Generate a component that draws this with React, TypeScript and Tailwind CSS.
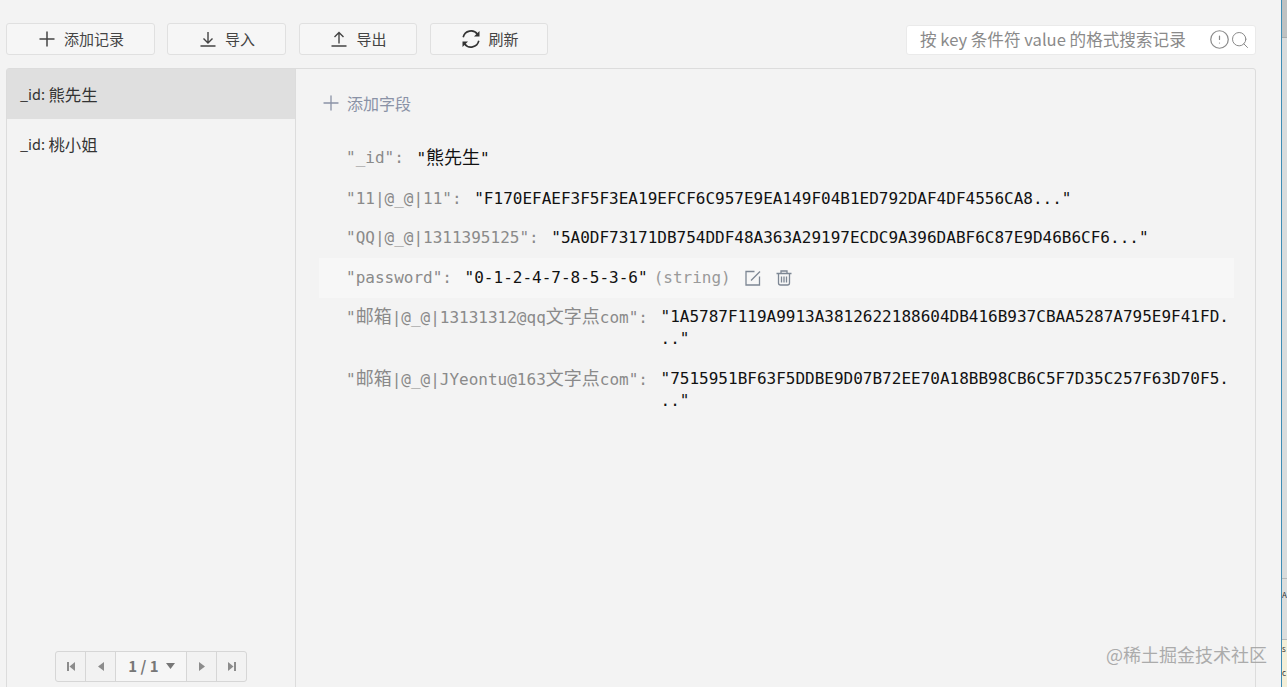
import { Plus, CircleAlert, Search } from "lucide-react";
import type { ReactNode } from "react";

const mono = "font-['DejaVu_Sans_Mono','Noto_Sans_CJK_SC',monospace]";

// CJK glyphs sit wider than the mono cells in this view
function Cjk({ children }: { children: ReactNode }) {
  return <span className="text-[18px]">{children}</span>;
}

function EditIcon() {
  return (
    <svg width="16" height="16" viewBox="0 0 16 16" fill="none" stroke="currentColor" strokeWidth="1.3" className="mr-[15px]">
      <path d="M9.500 1.500H1v13.500h13.500V6.500M6 10.500l9-9" />
    </svg>
  );
}

function TrashIcon() {
  return (
    <svg width="16" height="16" viewBox="0 0 16 16" fill="none" stroke="currentColor" strokeWidth="1.3">
      <path d="M.5 3.500h15M5 3.500V1h6v2.500M2.500 3.500v9.500a2 2 0 0 0 2 2h7a2 2 0 0 0 2-2V3.500M5.500 6.500v6M8 6.500v6M10.500 6.500v6" />
    </svg>
  );
}

// one key/value line of the document
function Field({ name, value, hover }: { name: ReactNode; value: ReactNode; hover?: boolean }) {
  return (
    <div className={`flex items-start pl-[27px] py-[8.75px] leading-[22px] text-[16px] ${hover ? "bg-[#f7f7f7]" : ""}`}>
      <span className="text-[#8a8a8a] shrink-0 whitespace-pre">{name}: </span>
      <span className="ml-[3px] text-[#111] whitespace-nowrap">{value}</span>
      {hover && (
        <div className="flex items-center ml-[6px] h-[22px] text-[#7d8794]">
          <span className="text-[#9a9a9a] mr-[14px]">(string)</span>
          <EditIcon />
          <TrashIcon />
        </div>
      )}
    </div>
  );
}

function ToolButton({ w, icon, label }: { w: string; icon: ReactNode; label: string }) {
  return (
    <button className={`${w} h-[32px] flex items-center justify-center gap-[9px] pl-[2px] rounded-[3px] border border-[#e0e0e0] bg-[#f6f6f6] text-[15px] text-[#444]`}>
      {icon}
      {label}
    </button>
  );
}

function PlusIcon() {
  return (
    <svg width="16" height="16" viewBox="0 0 16 16" fill="none" stroke="#444" strokeWidth="1.5">
      <path d="M8 .5v15M.5 8h15" />
    </svg>
  );
}

function DownIcon() {
  return (
    <svg width="16" height="16" viewBox="0 0 16 16" fill="none" stroke="#444" strokeWidth="1.4">
      <path d="M8 1v10.500M3.500 7.500 8 12l4.500-4.500M.5 15h15" />
    </svg>
  );
}

function UpIcon() {
  return (
    <svg width="16" height="16" viewBox="0 0 16 16" fill="none" stroke="#444" strokeWidth="1.4">
      <path d="M8 12.500V2M3.500 6 8 1.500 12.500 6M.5 15h15" />
    </svg>
  );
}

function RefreshIcon() {
  return (
    <svg width="20" height="20" viewBox="0 0 20 20" fill="none" stroke="#333" strokeWidth="1.6" className="-mr-[2px]">
      <path d="M2.200 8.200A8 8 0 0 1 16.500 5.300" />
      <path d="M17.800 11.800A8 8 0 0 1 3.500 14.700" />
      <path d="M18.500 2v5.500H13z" fill="#333" stroke="none" />
      <path d="M1.500 18v-5.500H7z" fill="#333" stroke="none" />
    </svg>
  );
}

function Pager() {
  const cell = "h-full flex items-center justify-center border-r border-[#d6d6d6] text-[#8c8c8c]";
  return (
    <div className="flex h-[31px] w-[192px] rounded-[3px] border border-[#d6d6d6] bg-[#f2f2f2]">
      <div className={`${cell} w-[30px]`}>
        <svg width="10" height="11" viewBox="0 0 10 11" fill="currentColor"><rect x="1" y="1" width="2" height="9" /><path d="M9 1v9L3.500 5.500z" /></svg>
      </div>
      <div className={`${cell} w-[30px]`}>
        <svg width="8" height="11" viewBox="0 0 8 11" fill="currentColor"><path d="M7 1v9L1 5.500z" /></svg>
      </div>
      <div className={`${cell} w-[71px] gap-[6px] pl-[2px] bg-[#f6f6f6] text-[15px] font-bold text-[#777]`}>
        1 / 1
        <svg width="11" height="7" viewBox="0 0 11 7" fill="currentColor"><path d="M1 0h9L5.500 6z" /></svg>
      </div>
      <div className={`${cell} w-[30px]`}>
        <svg width="8" height="11" viewBox="0 0 8 11" fill="currentColor"><path d="M1 1v9l6-4.500z" /></svg>
      </div>
      <div className="h-full flex-1 flex items-center justify-center text-[#8c8c8c]">
        <svg width="10" height="11" viewBox="0 0 10 11" fill="currentColor"><rect x="7" y="1" width="2" height="9" /><path d="M1 1v9l5.500-4.500z" /></svg>
      </div>
    </div>
  );
}

function RecordItem({ name, active }: { name: string; active?: boolean }) {
  return (
    <div className={`h-[50px] flex items-center pl-[13px] text-[14.5px] text-[#333] ${active ? "bg-[#dfdfdf]" : ""}`}>
      _id:&nbsp;<span className="text-[16.400px]">{name}</span>
    </div>
  );
}

export default function App() {
  return (
    <div className="relative flex w-[1287px] h-[687px] overflow-hidden bg-[#f3f3f3] font-['Noto_Sans_CJK_SC','Noto_Sans',sans-serif]">
      <div className="w-[1281px] h-full shrink-0 pl-[6px] pr-[25px] pt-[23px] flex flex-col">
        {/* Toolbar */}
        <div className="flex items-center h-[32px] gap-[12px] shrink-0">
          <ToolButton w="w-[149px]" icon={<PlusIcon />} label="添加记录" />
          <ToolButton w="w-[119px]" icon={<DownIcon />} label="导入" />
          <ToolButton w="w-[118px] ml-[1px]" icon={<UpIcon />} label="导出" />
          <ToolButton w="w-[118px] ml-[1px]" icon={<RefreshIcon />} label="刷新" />
          <div className="ml-auto w-[350px] h-[30px] mt-[1px] flex items-center pl-[13px] pr-[5px] rounded-[3px] border border-[#eaeaea] bg-white text-[16.6px] text-[#8a8a8a]">
            <span className="flex-1 whitespace-nowrap">按 key 条件符 value 的格式搜索记录</span>
            <CircleAlert size={21} strokeWidth={1.4} />
            <Search size={20} strokeWidth={1.2} />
          </div>
        </div>

        {/* Main panel */}
        <div className="mt-[13px] flex flex-1 min-h-0 -mb-[4px] rounded-[3px] border border-[#dcdcdc]">
          <div className="w-[289px] shrink-0 flex flex-col border-r border-[#dcdcdc]">
            <RecordItem name="熊先生" active />
            <RecordItem name="桃小姐" />
            <div className="mt-auto mb-[8px] self-center">
              <Pager />
            </div>
          </div>

          <div className={`flex-1 min-w-0 pl-[23px] pr-[21px] ${mono}`}>
            <div className="flex items-center h-[24px] mt-[22px] gap-[6px] text-[16px] text-[#8a92a6] font-['Noto_Sans_CJK_SC',sans-serif]">
              <Plus size={24} strokeWidth={1.3} className="-mr-[2px]" />
              添加字段
            </div>
            <div className="mt-[23.5px]">
              <Field name={'"_id"'} value={<>"<Cjk>熊先生</Cjk>"</>} />
              <Field name={'"11|@_@|11"'} value={'"F170EFAEF3F5F3EA19EFCF6C957E9EA149F04B1ED792DAF4DF4556CA8..."'} />
              <Field name={'"QQ|@_@|1311395125"'} value={'"5A0DF73171DB754DDF48A363A29197ECDC9A396DABF6C87E9D46B6CF6..."'} />
              <Field name={'"password"'} value={'"0-1-2-4-7-8-5-3-6"'} hover />
              <Field
                name={<>"<Cjk>邮箱</Cjk>|@_@|13131312@qq<Cjk>文字点</Cjk>com"</>}
                value={<>"1A5787F119A9913A3812622188604DB416B937CBAA5287A795E9F41FD.<br />.."</>}
              />
              <Field
                name={<>"<Cjk>邮箱</Cjk>|@_@|JYeontu@163<Cjk>文字点</Cjk>com"</>}
                value={<>"7515951BF63F5DDBE9D07B72EE70A18BB98CB6C5F7D35C257F63D70F5.<br />.."</>}
              />
            </div>
          </div>
        </div>
      </div>

      {/* Edge of the window behind */}
      <div className="flex-1 h-full flex flex-col border-l border-[#3f8db5] text-[8px] leading-[12px] text-[#333] overflow-hidden">
        <div className="h-[38px] bg-[#bfc2c2] border-b border-[#a8abab]" />
        <div className="flex-1 bg-[#d9dcdc]" />
        <div className="h-[62px] bg-[#dcdedd] border-t border-[#b5b8b8] border-b pt-[10px]">A</div>
        <div className="h-[47px] bg-[#f3efd8] pt-[3px]">
          <div>s</div>
          <div className="mt-[12px]">c</div>
        </div>
      </div>

      {/* Watermark */}
      <div className="absolute right-[20px] bottom-[21px] text-[18px] leading-[24px] text-[#9a9a9a] opacity-80">@稀土掘金技术社区</div>
    </div>
  );
}
